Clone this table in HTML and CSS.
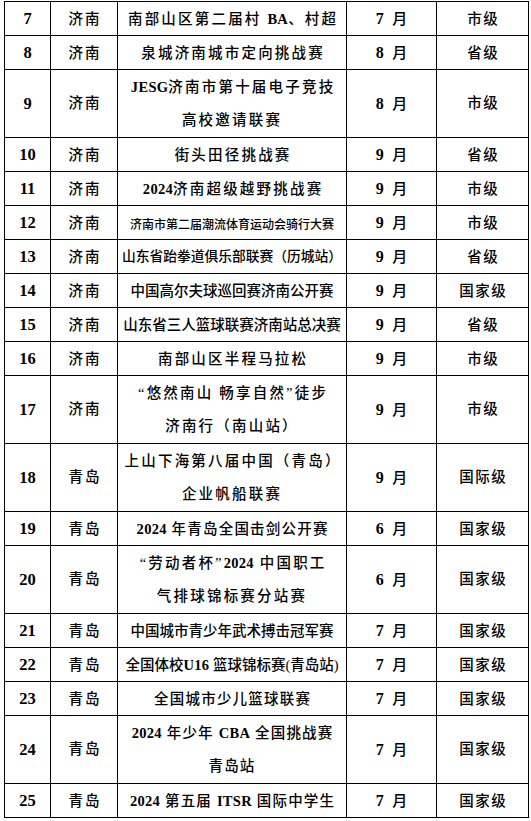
FILE: index.html
```html
<!DOCTYPE html>
<html lang="zh-CN">
<head>
<meta charset="utf-8">
<title>赛事列表</title>
<link rel="stylesheet" href="styles.css">
</head>
<body>
<table class="events">
  <colgroup>
    <col class="col-n"><col class="col-c"><col class="col-t"><col class="col-m"><col class="col-l">
  </colgroup>
  <tbody>
    <tr><td class="n">7</td><td class="c">济南</td><td class="t sp">南部山区第二届村 <b>BA</b>、村超</td><td class="m"><b>7</b>月</td><td class="l">市级</td></tr>
    <tr><td class="n">8</td><td class="c">济南</td><td class="t sp">泉城济南城市定向挑战赛</td><td class="m"><b>8</b>月</td><td class="l">省级</td></tr>
    <tr class="two"><td class="n">9</td><td class="c">济南</td><td class="t sp"><b>JESG</b>济南市第十届电子竞技<br>高校邀请联赛</td><td class="m"><b>8</b>月</td><td class="l">市级</td></tr>
    <tr><td class="n">10</td><td class="c">济南</td><td class="t sp">街头田径挑战赛</td><td class="m"><b>9</b>月</td><td class="l">省级</td></tr>
    <tr><td class="n">11</td><td class="c">济南</td><td class="t sp"><b>2024</b>济南超级越野挑战赛</td><td class="m"><b>9</b>月</td><td class="l">市级</td></tr>
    <tr><td class="n">12</td><td class="c">济南</td><td class="t small">济南市第二届潮流体育运动会骑行大赛</td><td class="m"><b>9</b>月</td><td class="l">市级</td></tr>
    <tr><td class="n">13</td><td class="c">济南</td><td class="t tight">山东省跆拳道俱乐部联赛（历城站）</td><td class="m"><b>9</b>月</td><td class="l">省级</td></tr>
    <tr><td class="n">14</td><td class="c">济南</td><td class="t">中国高尔夫球巡回赛济南公开赛</td><td class="m"><b>9</b>月</td><td class="l">国家级</td></tr>
    <tr><td class="n">15</td><td class="c">济南</td><td class="t">山东省三人篮球联赛济南站总决赛</td><td class="m"><b>9</b>月</td><td class="l">省级</td></tr>
    <tr><td class="n">16</td><td class="c">济南</td><td class="t sp">南部山区半程马拉松</td><td class="m"><b>9</b>月</td><td class="l">市级</td></tr>
    <tr class="two"><td class="n">17</td><td class="c">济南</td><td class="t sp">“悠然南山 畅享自然”徒步<br>济南行（南山站）</td><td class="m"><b>9</b>月</td><td class="l">市级</td></tr>
    <tr class="two"><td class="n">18</td><td class="c">青岛</td><td class="t sp">上山下海第八届中国（青岛）<br>企业帆船联赛</td><td class="m"><b>9</b>月</td><td class="l">国际级</td></tr>
    <tr><td class="n">19</td><td class="c">青岛</td><td class="t sp1"><b>2024</b> 年青岛全国击剑公开赛</td><td class="m"><b>6</b>月</td><td class="l">国家级</td></tr>
    <tr class="two"><td class="n">20</td><td class="c">青岛</td><td class="t sp">“劳动者杯”<b>2024</b> 中国职工<br>气排球锦标赛分站赛</td><td class="m"><b>6</b>月</td><td class="l">国家级</td></tr>
    <tr><td class="n">21</td><td class="c">青岛</td><td class="t">中国城市青少年武术搏击冠军赛</td><td class="m"><b>7</b>月</td><td class="l">国家级</td></tr>
    <tr><td class="n">22</td><td class="c">青岛</td><td class="t">全国体校<b>U16</b> 篮球锦标赛(青岛站)</td><td class="m"><b>7</b>月</td><td class="l">国家级</td></tr>
    <tr><td class="n">23</td><td class="c">青岛</td><td class="t sp1">全国城市少儿篮球联赛</td><td class="m"><b>7</b>月</td><td class="l">国家级</td></tr>
    <tr class="two"><td class="n">24</td><td class="c">青岛</td><td class="t sp1"><b>2024</b> 年少年 <b>CBA</b> 全国挑战赛<br>青岛站</td><td class="m"><b>7</b>月</td><td class="l">国家级</td></tr>
    <tr><td class="n">25</td><td class="c">青岛</td><td class="t sp1"><b>2024</b> 第五届 <b>ITSR</b> 国际中学生</td><td class="m"><b>7</b>月</td><td class="l">国家级</td></tr>
  </tbody>
</table>
</body>
</html>
```

FILE: styles.css
```css
html, body {
  margin: 0;
  padding: 0;
  background: #fff;
}

body {
  padding: 1px 0 0 4px;
  font-family: "Liberation Serif", "Noto Sans CJK SC", serif;
  color: #000;
}

.events {
  border-collapse: collapse;
  table-layout: fixed;
  width: 524px;
}

.col-n { width: 46px; }
.col-c { width: 67px; }
.col-t { width: 229px; }
.col-m { width: 90px; }
.col-l { width: 92px; }

.events td {
  border: 1px solid #000;
  padding: 0;
  height: 33px;
  line-height: 32px;
  text-align: center;
  vertical-align: middle;
  font-size: 14.5px;
  font-weight: 500;
  white-space: nowrap;
}

.events tr.two td {
  height: 67px;
  line-height: 33px;
}

.events b {
  font-weight: 700;
  letter-spacing: 0.3px;
}

.events td.n {
  font-weight: 700;
  font-size: 16.5px;
}

.events td.c {
  letter-spacing: 2px;
  text-indent: 2px;
}

.events td.m {
  font-size: 15px;
}

.events td.m b {
  font-size: 16px;
  margin-right: 8px;
}

.events td.l {
  letter-spacing: 1.5px;
  text-indent: 1.5px;
  font-size: 14.5px;
}

.events td.sp {
  letter-spacing: 2.2px;
  text-indent: 2.2px;
}

.events td.sp1 {
  letter-spacing: 1.2px;
  text-indent: 1.2px;
}

.events td.small {
  font-size: 12px;
  letter-spacing: 0;
  padding-top: 4px;
  height: 29px;
  line-height: 28px;
}

.events td.tight {
  font-size: 13.75px;
}
```
